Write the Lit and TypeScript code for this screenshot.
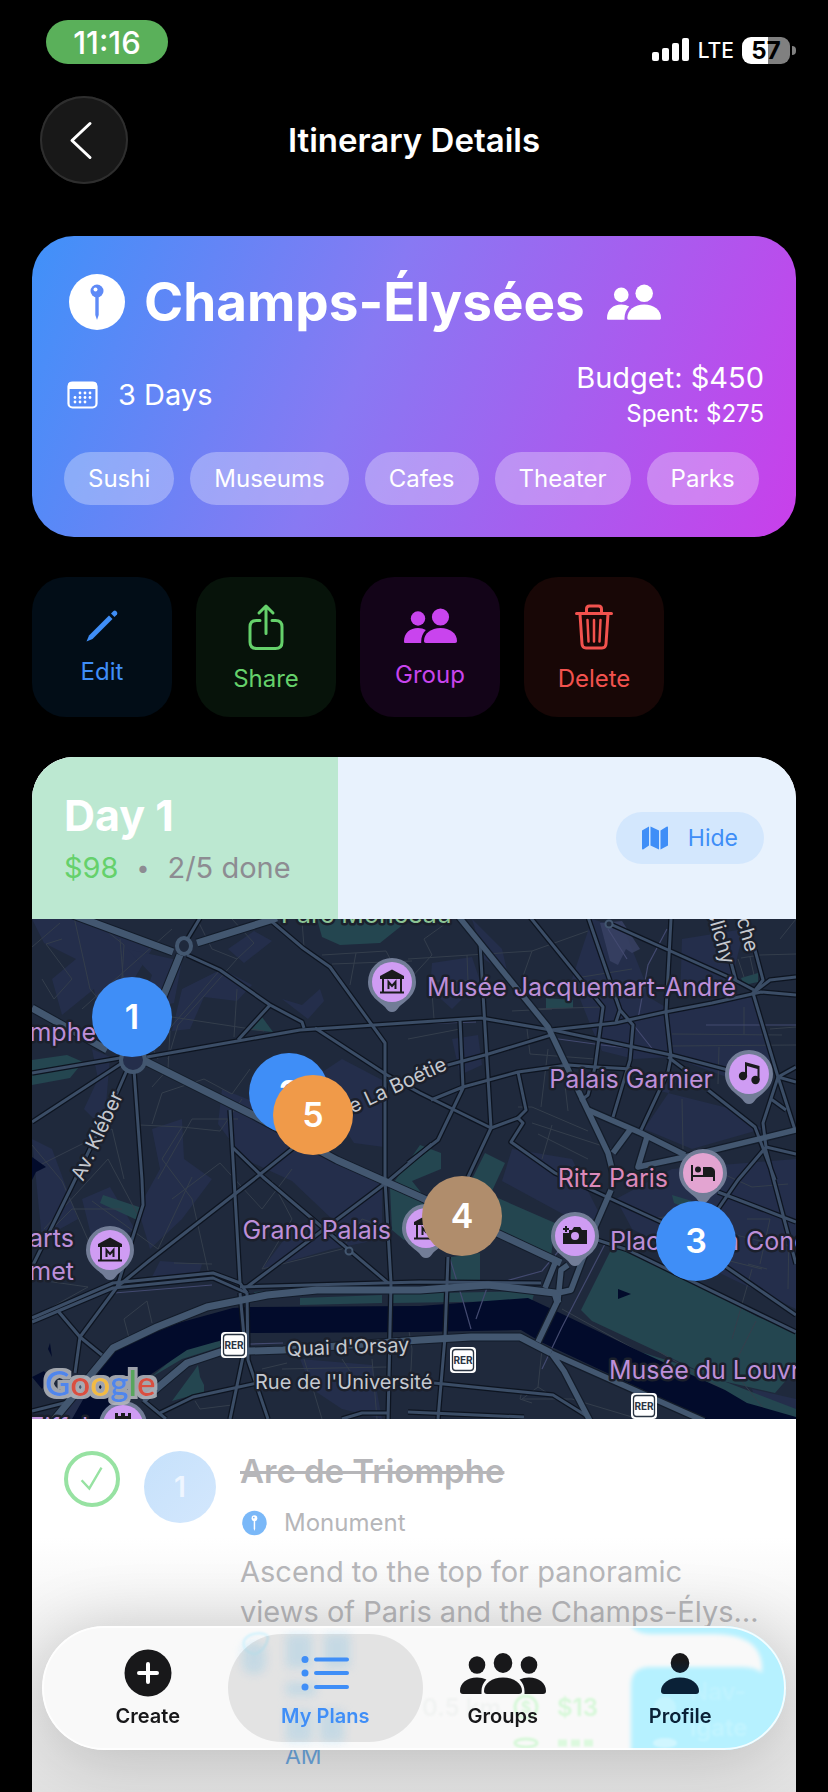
import { LitElement, html, css, svg } from "lit";
import { customElement, state } from "lit/decorators.js";
import { classMap } from "lit/directives/class-map.js";
import { styleMap } from "lit/directives/style-map.js";

const peoplePair = svg`
  <g fill="currentColor">
    <circle cx="14" cy="10.5" r="7.2"/>
    <circle cx="36.5" cy="9" r="8.6"/>
    <path d="M0 33.500C0 25 6 20 14 20c3 0 5.600.7 7.800 2-3 3-4.600 7-4.600 11.500V35H1.500C.5 35 0 34.500 0 33.500z"/>
    <path d="M20 33c0-7.500 7-13 16.500-13S53 25.500 53 33c0 1.300-.7 2-2 2H22c-1.300 0-2-.7-2-2z"/>
  </g>`;

const ROADS_MAJOR = [
  "M41 -4L141 33M165 24L245 -1M148 36L131 78M0 89L75 131",
  "M111 141L221 196L305 241L388 278L529 344",
  "M21 502L81 429L125 408L175 388L235 376L285 371L388 371L456 366L523 374L526 384",
  "M111 481L155 444L188 433L251 431L388 421L439 418L488 418L519 434",
];
const ROADS_MID = [
  "M427 -2L516 108L576 234L583 262",
  "M556 191L609 214L653 236M598 211L581 234M615 218L606 248L653 238L764 211",
  "M579 271L563 308L539 371L526 374M506 423L526 381L529 351L536 346M513 369L523 344",
  "M519 434L672 502M519 434L532 452L558 502",
];
const ROADS = [
  "M155 36L188 51L238 86L270 103L272 109M168 -1L156 19",
  "M238 1L271 29L298 48L353 124L353 261L359 364L356 502",
  "M115 138L268 111L388 103L449 99L519 111L583 104L633 93L680 84L729 73L764 76",
  "M283 109L355 156L388 174L459 209L486 199L491 204L479 223L523 254L629 303L764 396",
  "M238 86L206 121M0 154L88 139M0 203L90 144",
  "M95 151L85 174L38 271L0 348",
  "M102 151L110 261L111 286L104 308L85 368L48 418L43 454",
  "M198 191L201 241L208 364L215 374",
  "M201 229L231 258L356 364M261 229L221 261L118 341L85 368",
  "M400 225L355 263L215 368M0 403L81 369L181 359L215 374M0 399L81 364L181 354L208 364",
  "M208 368L388 363L509 364",
  "M128 494L161 478L225 464M208 374L213 428L198 500M215 374L216 441L236 500",
  "M416 338L413 418L406 500M0 492L40 482M111 481L134 500M26 392L48 418L70 436",
  "M448 24L459 209L436 258M498 -2L571 88L563 148",
  "M556 -2L588 91L601 106L598 141L581 198M588 91L584 103",
  "M576 4L703 61L722 71M639 0L634 93L639 138L636 153L609 211",
  "M723 31L731 61L721 74L746 158L763 211M699 43L704 62M764 58L738 61L721 74",
  "M521 111L639 136L696 151M519 116L453 136L416 146L388 155",
  "M563 148L536 146L486 153L431 168L399 181M428 101L431 169L406 221L376 244",
  "M486 153L494 191L486 199M563 148L556 176L548 182M563 148L600 150",
  "M636 138L652 150M676 171L723 208L743 261M733 228L764 345M746 158L764 148M746 158L764 163",
  "M746 158L731 204L734 228L706 261L686 290M739 180L754 191M734 228L764 235",
  "M556 318L596 331L764 413M686 273L764 303",
  "M402 464L521 476L558 499M376 493L492 498M310 500L330 494L356 494",
];
const ROADS_FAINT = [
  "M0 28L28 4M10 60L22 80L40 60L14 25L30 20M42 -2L58 70L92 110M50 90L78 65L140 10M88 20L92 70L126 140M60 0L92 26L88 90",
  "M136 140L146 106L205 40L222 24M140 98L232 112M165 0L180 30L205 40M205 70L202 118M188 51L120 130M138 112L136 150L120 168",
  "M120 205L130 174L172 160L200 175L218 150M150 208L188 212L210 180M108 206L150 208L130 240L160 280L178 360",
  "M270 2L272 28M290 36L354 32L372 66M324 34L318 66M300 45L380 42M222 24L200 0",
  "M0 226L30 262L60 330M0 250L80 210L92 260M12 310L76 240L108 300M60 282L126 330L160 258M0 330L40 290L90 290",
  "M126 260L160 200L206 200M140 280L188 244L230 290L260 250M240 262L260 300L230 350L310 330L330 300L358 310",
  "M0 360L56 368L20 388M92 400L100 430M92 400L115 382L120 404M142 344L180 345",
  "M392 20L400 36L378 60M392 20L420 0M399 60L402 100M435 36L436 62L402 62M376 40L500 32L556 12M500 32L490 60",
  "M500 90L571 88M495 110L498 135L563 140M480 92L520 90M550 58L600 50M376 120L428 110",
  "M486 188L500 188L556 212M506 215L556 240M520 206L510 240M536 192L530 140M500 204L580 230M516 130L509 188",
  "M639 127L764 126M640 115L750 116M687 128L686 165M712 88L712 115M764 108L738 110M650 180L651 230",
  "M709 39L728 36M706 40L712 58M728 36L764 35M718 38L722 56M748 20L764 0",
  "M620 300L680 290L706 330M715 300L738 300L728 345M700 315L740 325M716 345L735 350M680 250L720 268L756 265",
  "M720 350L700 420M740 320L764 330M757 312L756 370M690 340L730 350",
  "M510 430L506 468L490 480L540 480L600 498M506 468L556 500M490 472L488 480L500 484",
  "M272 440L290 500M310 440L330 470M340 440L345 500M250 450L355 448M163 482L168 490L200 486M230 450L255 444",
  "M376 406L380 430L378 470M530 390L620 440L670 470M626 432L700 476M724 402L700 450L740 500",
];
const BLOCKS = [
  "0,0 46,0 120,30 96,70 70,110 62,70 30,96 20,60 44,40 12,24",
  "170,60 190,50 220,66 205,82 172,78 158,110 140,112 150,70",
  "95,30 150,42 142,84 108,92 120,56",
  "222,12 240,22 212,44 196,30",
  "270,86 288,70 292,82 276,100 250,80",
  "60,130 78,138 72,210 52,190 66,160",
  "120,210 150,200 152,240 180,260 150,300 118,330 106,290 128,250",
  "190,170 240,190 300,240 350,262 350,320 300,330 230,350 260,310 300,300 260,262 212,240 186,205",
  "0,220 20,230 46,300 10,320",
  "50,280 78,268 104,312 60,320",
  "280,160 310,140 352,162 352,228 322,224",
  "480,230 540,240 570,300 540,300 470,262",
  "400,44 440,38 448,62 420,90 398,70",
  "420,120 446,116 450,146 428,156",
  "560,0 592,10 620,80 640,92 720,78 740,140 700,160 640,138 602,140 570,132 560,110 540,60",
  "620,170 700,190 730,210 660,230 612,210 646,160",
  "640,250 764,240 764,390 700,360 600,310 584,280",
  "650,20 712,10 700,60 648,80",
  "440,0 470,30 476,56 452,40",
  "128,342 170,345 165,362 118,362",
  "720,470 764,480 764,500 730,500",
  "268,440 340,446 350,500 310,490 280,470",
  "40,470 80,470 60,500 20,500",
];
const PARKS = [
  "285,0 290,18 308,26 348,24 378,0",
  "0,141 35,136 51,143 38,159 0,166",
  "230,98 241,113 218,111",
  "71,276 110,289 105,301 68,284",
  "514,79 541,81 541,89 514,90",
  "709,59 726,54 726,63 712,66",
  "388,226 409,234 409,250 380,262 410,300 372,321 360,311 358,269",
  "453,234 473,244 460,272 436,268",
  "466,279 523,304 519,338 466,311",
  "419,338 448,334 448,361 419,361",
  "360,375 503,372 500,382 360,384",
  "268,379 350,376 350,384 268,386",
  "222,373 245,371 236,378 222,378",
  "579,331 600,331 726,398 764,413 764,450 743,474 686,461 560,402 549,391",
  "118,459 155,428 188,422 188,428 150,440",
  "140,482 162,452 166,446 168,458 172,466 172,473",
  "640,276 660,282 652,288 642,284",
  "609,433 650,446 764,490 764,500 700,482",
];

@customElement("city-map")
class CityMap extends LitElement {
  static styles = css`
    :host { display: block; }
    svg { display: block; width: 100%; height: 100%; font-family: Inter, "Liberation Sans", sans-serif; }
    .place { font-size: 25px; fill: #bd8fd9; stroke: #1b202c; stroke-width: 5px; paint-order: stroke; stroke-linejoin: round; }
    .hotel { fill: #dc8abb; }
    .park { fill: #8cc495; }
    .street { font-size: 20px; fill: #c5c9d0; stroke: #1b202c; stroke-width: 5px; paint-order: stroke; stroke-linejoin: round; }
    .logo { font-family: Lato, sans-serif; font-size: 35px; font-weight: 600; }
    .rer { font-size: 10px; font-weight: 700; fill: #2a3442; }
  `;

  private pin(x: number, y: number, fill: string, glyph: unknown) {
    return svg`<g transform="translate(${x} ${y})">
      <path d="M0 30c-3 0-5-2-7-5C-12 20-24 14-24 0a24 24 0 1 1 48 0C24 14 12 20 7 25c-2 3-4 5-7 5z" fill="#727d97"/>
      <circle r="20" fill=${fill}/>${glyph}</g>`;
  }

  private rer(x: number, y: number) {
    return svg`<g transform="translate(${x} ${y})">
      <rect x="-13" y="-13" width="26" height="26" rx="4" fill="#fff"/>
      <rect x="-10.500" y="-10.500" width="21" height="21" rx="3" fill="none" stroke="#2a3442" stroke-width="1.300"/>
      <text class="rer" text-anchor="middle" y="4">RER</text></g>`;
  }

  render() {
    const museum = svg`<path d="M0 -12.500L12 -6V-3H-12V-6z" fill="#1a1a1d"/>
      <path d="M-9 -3V10M9 -3V10M-12 10.500H12" stroke="#1a1a1d" stroke-width="2" fill="none"/>
      <path d="M-3.500 7V0L0 4L3.500 0V7" stroke="#1a1a1d" stroke-width="2" fill="none"/>`;
    const music = svg`<g fill="#1a1a1d"><circle cx="-6" cy="2" r="4.200"/><circle cx="6.500" cy="6" r="4.200"/>
      <path d="M-4 -12L10.500 -8V6H8.500V-5L-2 -8V2H-4z"/></g>`;
    const bed = svg`<g fill="#1a1a1d"><path d="M-12 -8h2V2h20v-1h2v7h-2V4h-20v4h-2z"/><circle cx="-5" cy="-3.500" r="3"/><path d="M0 -6h6c4 0 6 2 6 5v4H0z"/></g>`;
    const camera = svg`<g fill="#1a1a1d"><path d="M-12 -3h6v-3h3l2-3h6l2 3h5V8h-24z"/><path d="M-10 -10h2v2h2v2h-2v2h-2v-2h-2v-2h2z"/></g><circle cy="0" r="4" fill="#cf9cf3"/>`;
    const tower = svg`<path d="M-8 -12h3v3h3v-3h4v3h3v-3h3v7l-3 2v14h-10V-3l-3-2z" fill="#1a1a1d"/>`;
    const violet = "#cf9cf3";
    return html`<svg viewBox="0 0 764 500" preserveAspectRatio="xMidYMid slice" role="img" aria-label="Map of Paris">
      <defs>
        <filter id="halo" x="-10%" y="-20%" width="120%" height="140%">
          <feMorphology in="SourceAlpha" operator="dilate" radius="3" result="wide"/>
          <feFlood flood-color="#b4b7bd" flood-opacity=".88"/>
          <feComposite in2="wide" operator="in"/>
          <feMerge><feMergeNode/><feMergeNode in="SourceGraphic"/></feMerge>
        </filter>
      </defs>
      <rect width="764" height="500" fill="#1f293c"/>
      ${BLOCKS.map((p) => svg`<polygon points=${p} fill="#242e4b"/>`)}
      ${PARKS.map((p) => svg`<polygon points=${p} fill="#244650"/>`)}
      <g fill="none" stroke="#343e4c" stroke-width="1">${ROADS_FAINT.map((d) => svg`<path d=${d}/>`)}</g>
      <path d="M40 500L78 433L128 409L201 389L218 388L388 387L496 379L526 393L609 433L693 471L715 484L764 498V500H673L509 423L489 411L388 413L215 414L155 431L115 458L80 500z" fill="#020b2b"/>
      <path d="M586 370l13 5l-13 5zM0 238l14 10l-10 5l-4 8zM18 424l-2 6 4 8M0 458l12-6 6 8-8 10z" fill="#020b2b"/>
      <path d="M568 4L590 2L608 30L600 34L594 30L586 46L578 42z" fill="#3a4265" opacity=".8"/>
      <g fill="none" stroke="#434a70" stroke-width="1.200">
        <path d="M82 374L180 366M376 105L444 103M512 118L570 126L620 132M674 106H764M635 10L616 46L606 100M600 104L622 132M595 40L576 10"/>
        <path d="M573 325L530 408L510 450M418 340L431 382L439 410M456 366L444 400M188 426L251 424M474 362L510 352L530 328"/>
      </g>
      <g fill="none" stroke-linejoin="round">
        ${ROADS.map((d) => svg`<path d=${d} stroke="#0d1420" stroke-width="5.500"/>`)}
        ${ROADS_MID.map((d) => svg`<path d=${d} stroke="#131c2a" stroke-width="8"/>`)}
        ${ROADS_MAJOR.map((d) => svg`<path d=${d} stroke="#131c2a" stroke-width="9"/>`)}
        ${ROADS.map((d) => svg`<path d=${d} stroke="#3b4d66" stroke-width="3"/>`)}
        ${ROADS_MID.map((d) => svg`<path d=${d} stroke="#435770" stroke-width="5.500"/>`)}
        ${ROADS_MAJOR.map((d) => svg`<path d=${d} stroke="#435770" stroke-width="7"/>`)}
        <circle cx="101" cy="141" r="12" stroke="#435770" stroke-width="4" fill="#242e4b"/>
        <ellipse cx="152" cy="27" rx="7" ry="8" stroke="#435770" stroke-width="4" fill="#1f293c"/>
        <circle cx="317" cy="332" r="3.500" stroke="#435770" stroke-width="2" fill="#1f293c"/>
        <circle cx="577" cy="5" r="3.500" stroke="#435770" stroke-width="2" fill="#1f293c"/>
      </g>
      <text class="place park" x="249" y="4">Parc Monceau</text>
      <text class="place" x="395" y="77">Musée Jacquemart-André</text>
      <text class="place" x="64" y="122" text-anchor="end">Arc de Triomphe</text>
      <text class="place" x="681" y="169" text-anchor="end">Palais Garnier</text>
      <text class="place hotel" x="636" y="268" text-anchor="end">Ritz Paris</text>
      <text class="place" x="578" y="331">Place de la Concorde</text>
      <text class="place" x="577" y="460">Musée du Louvre</text>
      <text class="place" x="359" y="320" text-anchor="end">Grand Palais</text>
      <text class="place" x="42" y="328" text-anchor="end">arts</text>
      <text class="place" x="42" y="361" text-anchor="end">Guimet</text>
      <text class="place" x="56" y="517" text-anchor="end">Tour Eiffel</text>
      <text class="street" transform="translate(51 263) rotate(-65)">Av. Kléber</text>
      <text class="street" text-anchor="end" transform="translate(416 150) rotate(-25)">Rue de La Boétie</text>
      <text class="street" text-anchor="end" transform="translate(690 46) rotate(74)">Rue de Clichy</text>
      <text class="street" text-anchor="end" transform="translate(714 34) rotate(74)">Rue Blanche</text>
      <text class="street" transform="translate(255 437) rotate(-2)">Quai d'Orsay</text>
      <text class="street" x="223" y="470">Rue de l'Université</text>
      ${this.pin(360, 63, violet, museum)}
      ${this.pin(78, 331, violet, museum)}
      ${this.pin(394, 309, violet, museum)}
      ${this.pin(717, 155, violet, music)}
      ${this.pin(671, 254, "#e3a4d1", bed)}
      ${this.pin(543, 317, violet, camera)}
      ${this.pin(91, 506, violet, tower)}
      ${this.rer(202, 426)}${this.rer(431, 441)}${this.rer(612, 487)}
      <text class="logo" x="13" y="477" filter="url(#halo)"><tspan fill="#4f86ec">G</tspan><tspan fill="#d9503f">o</tspan><tspan fill="#f2bb42">o</tspan><tspan fill="#4f86ec">g</tspan><tspan fill="#58a55c">l</tspan><tspan fill="#d9503f">e</tspan></text>
    </svg>`;
  }
}

@customElement("tab-bar")
class TabBar extends LitElement {
  @state() private current = "My Plans";

  static styles = css`
    :host { display: block; }
    nav {
      position: relative; display: flex; height: 124px; padding: 0 17px; box-sizing: border-box;
      border-radius: 62px; background: #f9f9f9; box-shadow: 0 6px 70px rgba(0, 0, 0, 0.2);
      font-family: Inter, "Liberation Sans", sans-serif; isolation: isolate;
    }
    .glass { position: absolute; inset: 0; overflow: hidden; border-radius: 62px; z-index: -2; }
    .glass svg { position: absolute; right: 0; top: 0; width: 744px; height: 124px; }
    .edge { position: absolute; inset: 0; border-radius: 62px; border: 2px solid rgba(255, 255, 255, 0.85); pointer-events: none; box-sizing: border-box; }
    button {
      position: relative; flex: 1; border: 0; padding: 2px 0 0; background: none; font: inherit; color: #18181a;
      font-size: 20px; line-height: 28px; font-weight: 600;
      display: flex; flex-direction: column; align-items: center; justify-content: center; gap: 5px;
    }
    button svg { height: 48px; width: 88px; display: block; }
    .on { color: #3f8ef7; }
    .on::before { content: ""; position: absolute; inset: 8px -9px; border-radius: 54px; background: rgba(0, 0, 0, 0.085); z-index: -1; }
    .tinted { color: #0a2137; }
    .ghost { font-size: 24px; font-weight: 600; }
  `;

  render() {
    const tabs: [string, unknown][] = [
      ["Create", svg`<circle cx="44" cy="24" r="23.500" fill="currentColor"/><path d="M44 15V33M35 24H53" stroke="#fff" stroke-width="4" stroke-linecap="round"/>`],
      ["My Plans", svg`<g stroke="currentColor" stroke-width="4" stroke-linecap="round"><path d="M35 10.500H66M35 24H66M35 38H66"/></g><g fill="currentColor"><circle cx="24" cy="10.500" r="3.500"/><circle cx="24" cy="24" r="3.500"/><circle cx="24" cy="38" r="3.500"/></g>`],
      ["Groups", svg`<g fill="currentColor"><ellipse cx="18" cy="16" rx="8.300" ry="8.700"/><ellipse cx="70" cy="16" rx="8.300" ry="8.700"/><ellipse cx="44" cy="14" rx="9.300" ry="10"/>
        <path d="M1 42C1 34 8 28.500 18 28.500c3.500 0 6.700.8 9.400 2C24 34 22.500 38 22.500 42v3H4c-2 0-3-1-3-3z"/><path d="M87 42c0-8-7-13.500-17-13.500-3.500 0-6.700.8-9.400 2C64 34 65.500 38 65.500 42v3H84c2 0 3-1 3-3z"/>
        <path d="M25 42c0-7.500 8-13.500 19-13.500S63 34.500 63 42c0 2-1 3-3 3H28c-2 0-3-1-3-3z"/></g>`],
      ["Profile", svg`<defs><linearGradient id="dip" gradientUnits="userSpaceOnUse" x1="0" y1="4" x2="0" y2="28"><stop offset=".3" stop-color="#18181a"/><stop offset="1" stop-color="#0a2137"/></linearGradient></defs><g fill="url(#dip)"><ellipse cx="44" cy="14" rx="9.300" ry="10"/><path d="M25 42c0-7.500 8-13.500 19-13.500S63 34.500 63 42c0 2-1 3-3 3H28c-2 0-3-1-3-3z"/></g>`],
    ];
    return html`<nav aria-label="Main">
      <div class="glass" aria-hidden="true">
        <svg viewBox="0 0 744 124">
          <defs>
            <filter id="soft" x="-20%" y="-20%" width="140%" height="140%"><feGaussianBlur stdDeviation="5"/></filter>
            <filter id="fine" x="-20%" y="-20%" width="140%" height="140%"><feGaussianBlur stdDeviation="2"/></filter>
            <filter id="faint" x="-20%" y="-20%" width="140%" height="140%"><feGaussianBlur stdDeviation="1"/></filter>
          </defs>
          <g fill="#d0ebfa" filter="url(#soft)" opacity=".8">
            <rect x="200" y="16" width="24" height="32" rx="10"/><rect x="244" y="8" width="26" height="34"/><rect x="282" y="8" width="26" height="34"/>
            <rect x="244" y="56" width="30" height="14"/><rect x="244" y="84" width="26" height="32"/><rect x="278" y="84" width="24" height="32"/>
          </g>
          <path d="M202 20c-4-14 24-16 24-8-2 10-8 14-12 16-6 0-10-2-12-8z" fill="none" stroke="#cdf1fd" stroke-width="2" filter="url(#faint)"/>
          <path d="M589 134V60q0-19 19-19H700q14 0 20 6V38Q716 8 672 8H608q-14-1-19-8V-8H754V134z" fill="#b6f1ff" filter="url(#fine)"/>
          <g class="ghost" filter="url(#faint)">
            <text x="380" y="90" fill="#f1f3f2">0.5 km</text>
            <text x="515" y="90" fill="#d6f8d8">$13</text>
            <circle cx="484" cy="81" r="11" fill="none" stroke="#d6f8d8" stroke-width="3"/>
            <text x="484" y="87" font-size="16" text-anchor="middle" fill="#d6f8d8">$</text>
            <text x="648" y="74" fill="#bff3ff">Nav-</text>
            <text x="648" y="110" fill="#c2f4ff">igate</text>
            <circle cx="623" cy="82" r="11" fill="#c4f4ff"/>
            <ellipse cx="623" cy="117" rx="12" ry="5" fill="#d0f6ff"/>
            <ellipse cx="484" cy="117" rx="11" ry="4" fill="none" stroke="#d6f8d8" stroke-width="3"/>
            <path d="M516 117h36" stroke="#dcf9de" stroke-width="7" stroke-dasharray="9 4" fill="none"/>
          </g>
        </svg>
        <div class="edge"></div>
      </div>
      ${tabs.map(([name, icon]) => html`<button
        class=${classMap({ on: name === this.current, tinted: name === "Profile" })}
        @click=${() => (this.current = name)}>
        <svg viewBox="0 0 88 48" aria-hidden="true">${icon}</svg>${name}
      </button>`)}
    </nav>`;
  }
}

@customElement("app-root")
class AppRoot extends LitElement {
  @state() private mapShown = true;

  private tags = ["Sushi", "Museums", "Cafes", "Theater", "Parks"];
  private done = 2;
  private total = 5;
  private stops = [
    { n: 1, x: 100, y: 98, tone: "blue" },
    { n: 2, x: 257, y: 174, tone: "blue" },
    { n: 5, x: 281, y: 196, tone: "orange" },
    { n: 4, x: 430, y: 297, tone: "brown" },
    { n: 3, x: 664, y: 322, tone: "blue" },
  ];
  private actions = [
    { name: "Edit", tone: "edit", w: 36, h: 36, icon: svg`<path d="M2.500 33.500L5 27.500L25 7.500L28.500 11L8.500 31z" fill="currentColor"/><path d="M27 5.500L29.500 3Q31 2 32.500 3.500T33 6.500L30.500 9z" fill="currentColor"/>` },
    { name: "Share", tone: "share", w: 40, h: 50, icon: svg`<g fill="none" stroke="currentColor" stroke-width="3" stroke-linecap="round" stroke-linejoin="round"><path d="M14 19.500H10.500Q4 19.500 4 26V41Q4 47.500 10.500 47.500H29.500Q36 47.500 36 41V26Q36 19.500 29.500 19.500H26"/><path d="M20 32.500V6M13 12L20 5L27 12"/></g>` },
    { name: "Group", tone: "group", w: 53, h: 42, icon: svg`<g transform="translate(0 3)">${peoplePair}</g>` },
    { name: "Delete", tone: "delete", w: 40, h: 50, icon: svg`<g fill="none" stroke="currentColor" stroke-width="3" stroke-linecap="round" stroke-linejoin="round"><path d="M2.500 12.500H37.500M12.500 12V8Q12.500 5 15.500 5H24.500Q27.500 5 27.500 8V12"/><path d="M6 13L8 43Q8.300 47 12 47H28Q31.700 47 32 43L34 13"/><path d="M13.500 19L14.500 40.500M20 19V40.500M26.500 19L25.500 40.500" stroke-width="2.500"/></g>` },
  ];

  static styles = css`
    :host {
      display: block; position: relative; min-height: 100vh; background: #000; color: #fff;
      font-family: Inter, "Liberation Sans", sans-serif; box-sizing: border-box; overflow: hidden;
    }
    button { font: inherit; border: 0; margin: 0; cursor: pointer; }
    h1, h2, h3, p { margin: 0; }
    svg { display: block; flex: none; }
    .page { display: flex; flex-direction: column; min-height: 100vh; padding: 20px 32px 0; box-sizing: border-box; }

    .status { display: flex; justify-content: space-between; align-items: flex-start; padding: 0 2px 0 14px; }
    .clock { width: 122px; height: 44px; border-radius: 22px; background: #5ab05a; display: grid; place-items: center; font-size: 31px; font-weight: 500; }
    .signals { display: flex; align-items: center; gap: 8px; margin-top: 16px; height: 28px; font-size: 21px; font-weight: 500; }
    .battery { position: relative; width: 48px; height: 27px; border-radius: 9px; background: linear-gradient(90deg, #fff 55%, #808080 55%); color: #000; font-size: 24px; font-weight: 700; line-height: 27px; text-align: center; margin-right: 4px; }
    .battery::after { content: ""; position: absolute; right: -6px; top: 9px; width: 4px; height: 9px; border-radius: 0 4px 4px 0; background: #808080; }

    .bar { display: grid; grid-template-columns: 88px 1fr 88px; align-items: center; margin-top: 32px; padding: 0 8px; }
    .bar h1 { font-size: 33px; line-height: 44px; font-weight: 600; text-align: center; }
    .back { width: 88px; height: 88px; border-radius: 50%; background: #181818; color: #fff; padding: 0; display: grid; place-items: center; box-shadow: inset 0 0 0 2px #2e2e2e; }

    .trip { margin-top: 52px; padding: 32px; border-radius: 42px; background: linear-gradient(112deg, #3f91f9, #8879f3 43%, #c93fea); display: flex; flex-direction: column; }
    .name { display: flex; align-items: center; gap: 16px; height: 68px; }
    .name h2 { font-size: 53px; line-height: 68px; font-weight: 700; margin-right: 6px; }
    .facts { display: flex; justify-content: space-between; align-items: center; margin-top: 20px; }
    .days { display: flex; align-items: center; gap: 18px; font-size: 29px; line-height: 40px; padding-top: 4px; }
    .money { text-align: right; font-size: 29px; line-height: 40px; padding-top: 2px; }
    .spent { font-size: 24px; line-height: 32px; }
    .tags { display: flex; flex-wrap: wrap; gap: 16px; margin: 22px 0 0; list-style: none; padding: 0; }
    .tags li { padding: 0 24px; border-radius: 27px; background: rgba(255, 255, 255, 0.3); font-size: 24px; line-height: 53px; }

    .actions { display: flex; gap: 24px; margin-top: 40px; }
    .action { width: 140px; height: 140px; border-radius: 34px; padding: 0; display: flex; flex-direction: column; align-items: center; justify-content: center; gap: 14px; font-size: 24px; line-height: 28px; }
    .edit { background: #020d17; color: #3f8ef7; }
    .share { background: #07130a; color: #65d16b; }
    .group { background: #130418; color: #c944ee; }
    .delete { background: #180706; color: #f2524e; }

    .day { flex: 1; margin-top: 40px; border-radius: 42px 42px 0 0; overflow: hidden; background: linear-gradient(180deg, #fff 780px, #f4f4f4 860px, #e2e2e2 1035px); display: flex; flex-direction: column; }
    .head { position: relative; isolation: isolate; display: flex; justify-content: space-between; align-items: center; padding: 32px; background: #e8f2fd; }
    .progress { position: absolute; inset: 0 auto 0 0; background: #bce8d1; z-index: -1; }
    .head h2 { font-size: 43px; line-height: 52px; font-weight: 700; }
    .sum { display: flex; gap: 18px; margin-top: 8px; font-size: 29px; line-height: 38px; color: #8d8c92; }
    .dot { font-size: 23px; }
    .cost { color: #65d16b; }
    .toggle { display: flex; align-items: center; gap: 20px; height: 52px; padding: 0 26px; border-radius: 26px; background: #d3e7fd; color: #3f8ef7; font-size: 23px; }

    .map { position: relative; height: 500px; overflow: hidden; }
    .map city-map { height: 100%; }
    .stop { position: absolute; width: 80px; height: 80px; margin: -40px 0 0 -40px; padding: 0; border-radius: 50%; color: #fff; font-size: 34px; font-weight: 600; line-height: 80px; }
    .blue { background: #3f8ef7; }
    .orange { background: #f09a49; }
    .brown { background: #b08d6c; }

    .item { display: flex; gap: 24px; padding: 32px; align-items: flex-start; }
    .tick { appearance: none; flex: none; width: 56px; height: 56px; margin: 0; border: 4px solid #97e2a2; border-radius: 50%; display: grid; place-items: center; }
    .tick:checked::before { content: ""; width: 24px; height: 24px; background: #97e2a2; clip-path: path("M2.500 12.500L9 19.500L20.500 0L22.500 1.300L9.500 23.500L0.700 14z"); }
    .badge { flex: none; width: 72px; height: 72px; border-radius: 50%; background: linear-gradient(135deg, #c6e1fb, #d3e7fd); color: #eff6ff; font-size: 28px; font-weight: 600; line-height: 72px; text-align: center; }
    .text { flex: 1; min-width: 0; color: #b6b6b9; }
    .text h3 { font-size: 33px; line-height: 40px; font-weight: 600; text-decoration: line-through; text-decoration-thickness: 3px; }
    .kind { display: flex; align-items: center; gap: 16px; margin-top: 16px; font-size: 24px; line-height: 32px; }
    .about { margin-top: 13px; font-size: 29px; line-height: 40px; white-space: nowrap; overflow: hidden; text-overflow: ellipsis; }
    .about + .about { margin-top: 0; }
    .when { display: block; width: 64px; margin: 12px 0 0 45px; font-size: 23px; line-height: 32px; color: #6aa3d9; }
    .tabs { position: fixed; left: 42px; right: 42px; bottom: 42px; }
  `;

  private pinIcon(size: number, disc: string, pin: string) {
    return html`<svg width=${size} height=${size} viewBox="0 0 64 64" aria-hidden="true">
      <circle cx="33" cy="32" r="28" fill=${disc}/>
      <circle cx="33" cy="21" r="6.500" fill=${pin}/><circle cx="31.500" cy="19.500" r="2" fill=${disc}/>
      <path d="M31.300 27h3.400v18L33 50l-1.700-5z" fill=${pin}/></svg>`;
  }

  render() {
    return html`
      <div class="page">
        <div class="status">
          <div class="clock">11:16</div>
          <div class="signals">
            <svg width="38" height="24" viewBox="0 0 38 24" fill="#fff" aria-hidden="true"><rect y="14" width="7" height="9" rx="2"/><rect x="10" y="10" width="7" height="13" rx="2"/><rect x="20" y="5" width="7" height="18" rx="2"/><rect x="30" width="7" height="23" rx="2"/></svg>
            <span>LTE</span>
            <div class="battery">57</div>
          </div>
        </div>
        <header class="bar">
          <button class="back" aria-label="Back">
            <svg width="30" height="40" viewBox="0 0 30 40" fill="none" stroke="currentColor" stroke-width="3" stroke-linecap="round" stroke-linejoin="round" aria-hidden="true"><path d="M21 3.500L3 20.500L21 37.500"/></svg>
          </button>
          <h1>Itinerary Details</h1>
        </header>

        <section class="trip">
          <div class="name">
            ${this.pinIcon(64, "#fff", "#5e8af7")}
            <h2>Champs-Élysées</h2>
            <svg width="54" height="36" viewBox="0 0 53 35" aria-hidden="true">${peoplePair}</svg>
          </div>
          <div class="facts">
            <div class="days">
              <svg width="36" height="32" viewBox="0 0 36 32" aria-hidden="true"><rect x="4.500" y="3.500" width="28" height="25" rx="4" fill="none" stroke="#fff" stroke-width="2.200"/><path d="M4 10V6q0-3 3-3h23q3 0 3 3v4z" fill="#fff"/>
                <g fill="#fff">${[[15, 14], [20, 14], [25, 14], [10, 18.5], [15, 18.5], [20, 18.5], [25, 18.5], [10, 23], [15, 23], [20, 23]].map(([x, y]) => svg`<circle cx=${x + 1} cy=${y} r="1.400"/>`)}</g></svg>
              <span>3 Days</span>
            </div>
            <div class="money">
              <p>Budget: $450</p>
              <p class="spent">Spent: $275</p>
            </div>
          </div>
          <ul class="tags">${this.tags.map((t) => html`<li>${t}</li>`)}</ul>
        </section>

        <div class="actions">
          ${this.actions.map((a) => html`<button class="action ${a.tone}">
            <svg width=${a.w} height=${a.h} viewBox="0 0 ${a.w} ${a.h}" aria-hidden="true">${a.icon}</svg>${a.name}
          </button>`)}
        </div>

        <section class="day">
          <div class="head">
            <div class="progress" style=${styleMap({ width: `${(this.done / this.total) * 100}%` })}></div>
            <div>
              <h2>Day 1</h2>
              <div class="sum"><span class="cost">$98</span><span class="dot">•</span><span>${this.done}/${this.total} done</span></div>
            </div>
            <button class="toggle" @click=${() => (this.mapShown = !this.mapShown)}>
              <svg width="26" height="24" viewBox="0 0 26 24" fill="currentColor" aria-hidden="true"><path d="M0 4.500L7 .5V19.500L1.500 23.300Q0 24 0 22.500zM8.500 .5L17 4.500V23.500L8.500 19.500zM18.500 4.500L24.500 .7Q26 0 26 1.500V19.500L18.500 23.500z"/></svg>
              ${this.mapShown ? "Hide" : "Show"}
            </button>
          </div>
          ${this.mapShown ? html`<div class="map">
            <city-map></city-map>
            ${this.stops.map((s) => html`<button class="stop ${s.tone}" style=${styleMap({ left: `${(s.x / 764) * 100}%`, top: `${s.y / 5}%` })}>${s.n}</button>`)}
          </div>` : null}
          <article class="item">
            <input class="tick" type="checkbox" checked aria-label="Arc de Triomphe done">
            <div class="badge">1</div>
            <div class="text">
              <h3>Arc de Triomphe</h3>
              <div class="kind">${this.pinIcon(28, "#7ab8f8", "#fff")}<span>Monument</span></div>
              <p class="about">Ascend to the top for panoramic</p>
              <p class="about">views of Paris and the Champs-Élys…</p>
              <time class="when">9:00 AM - 10:00 AM</time>
            </div>
          </article>
        </section>
      </div>
      <tab-bar class="tabs"></tab-bar>`;
  }
}
